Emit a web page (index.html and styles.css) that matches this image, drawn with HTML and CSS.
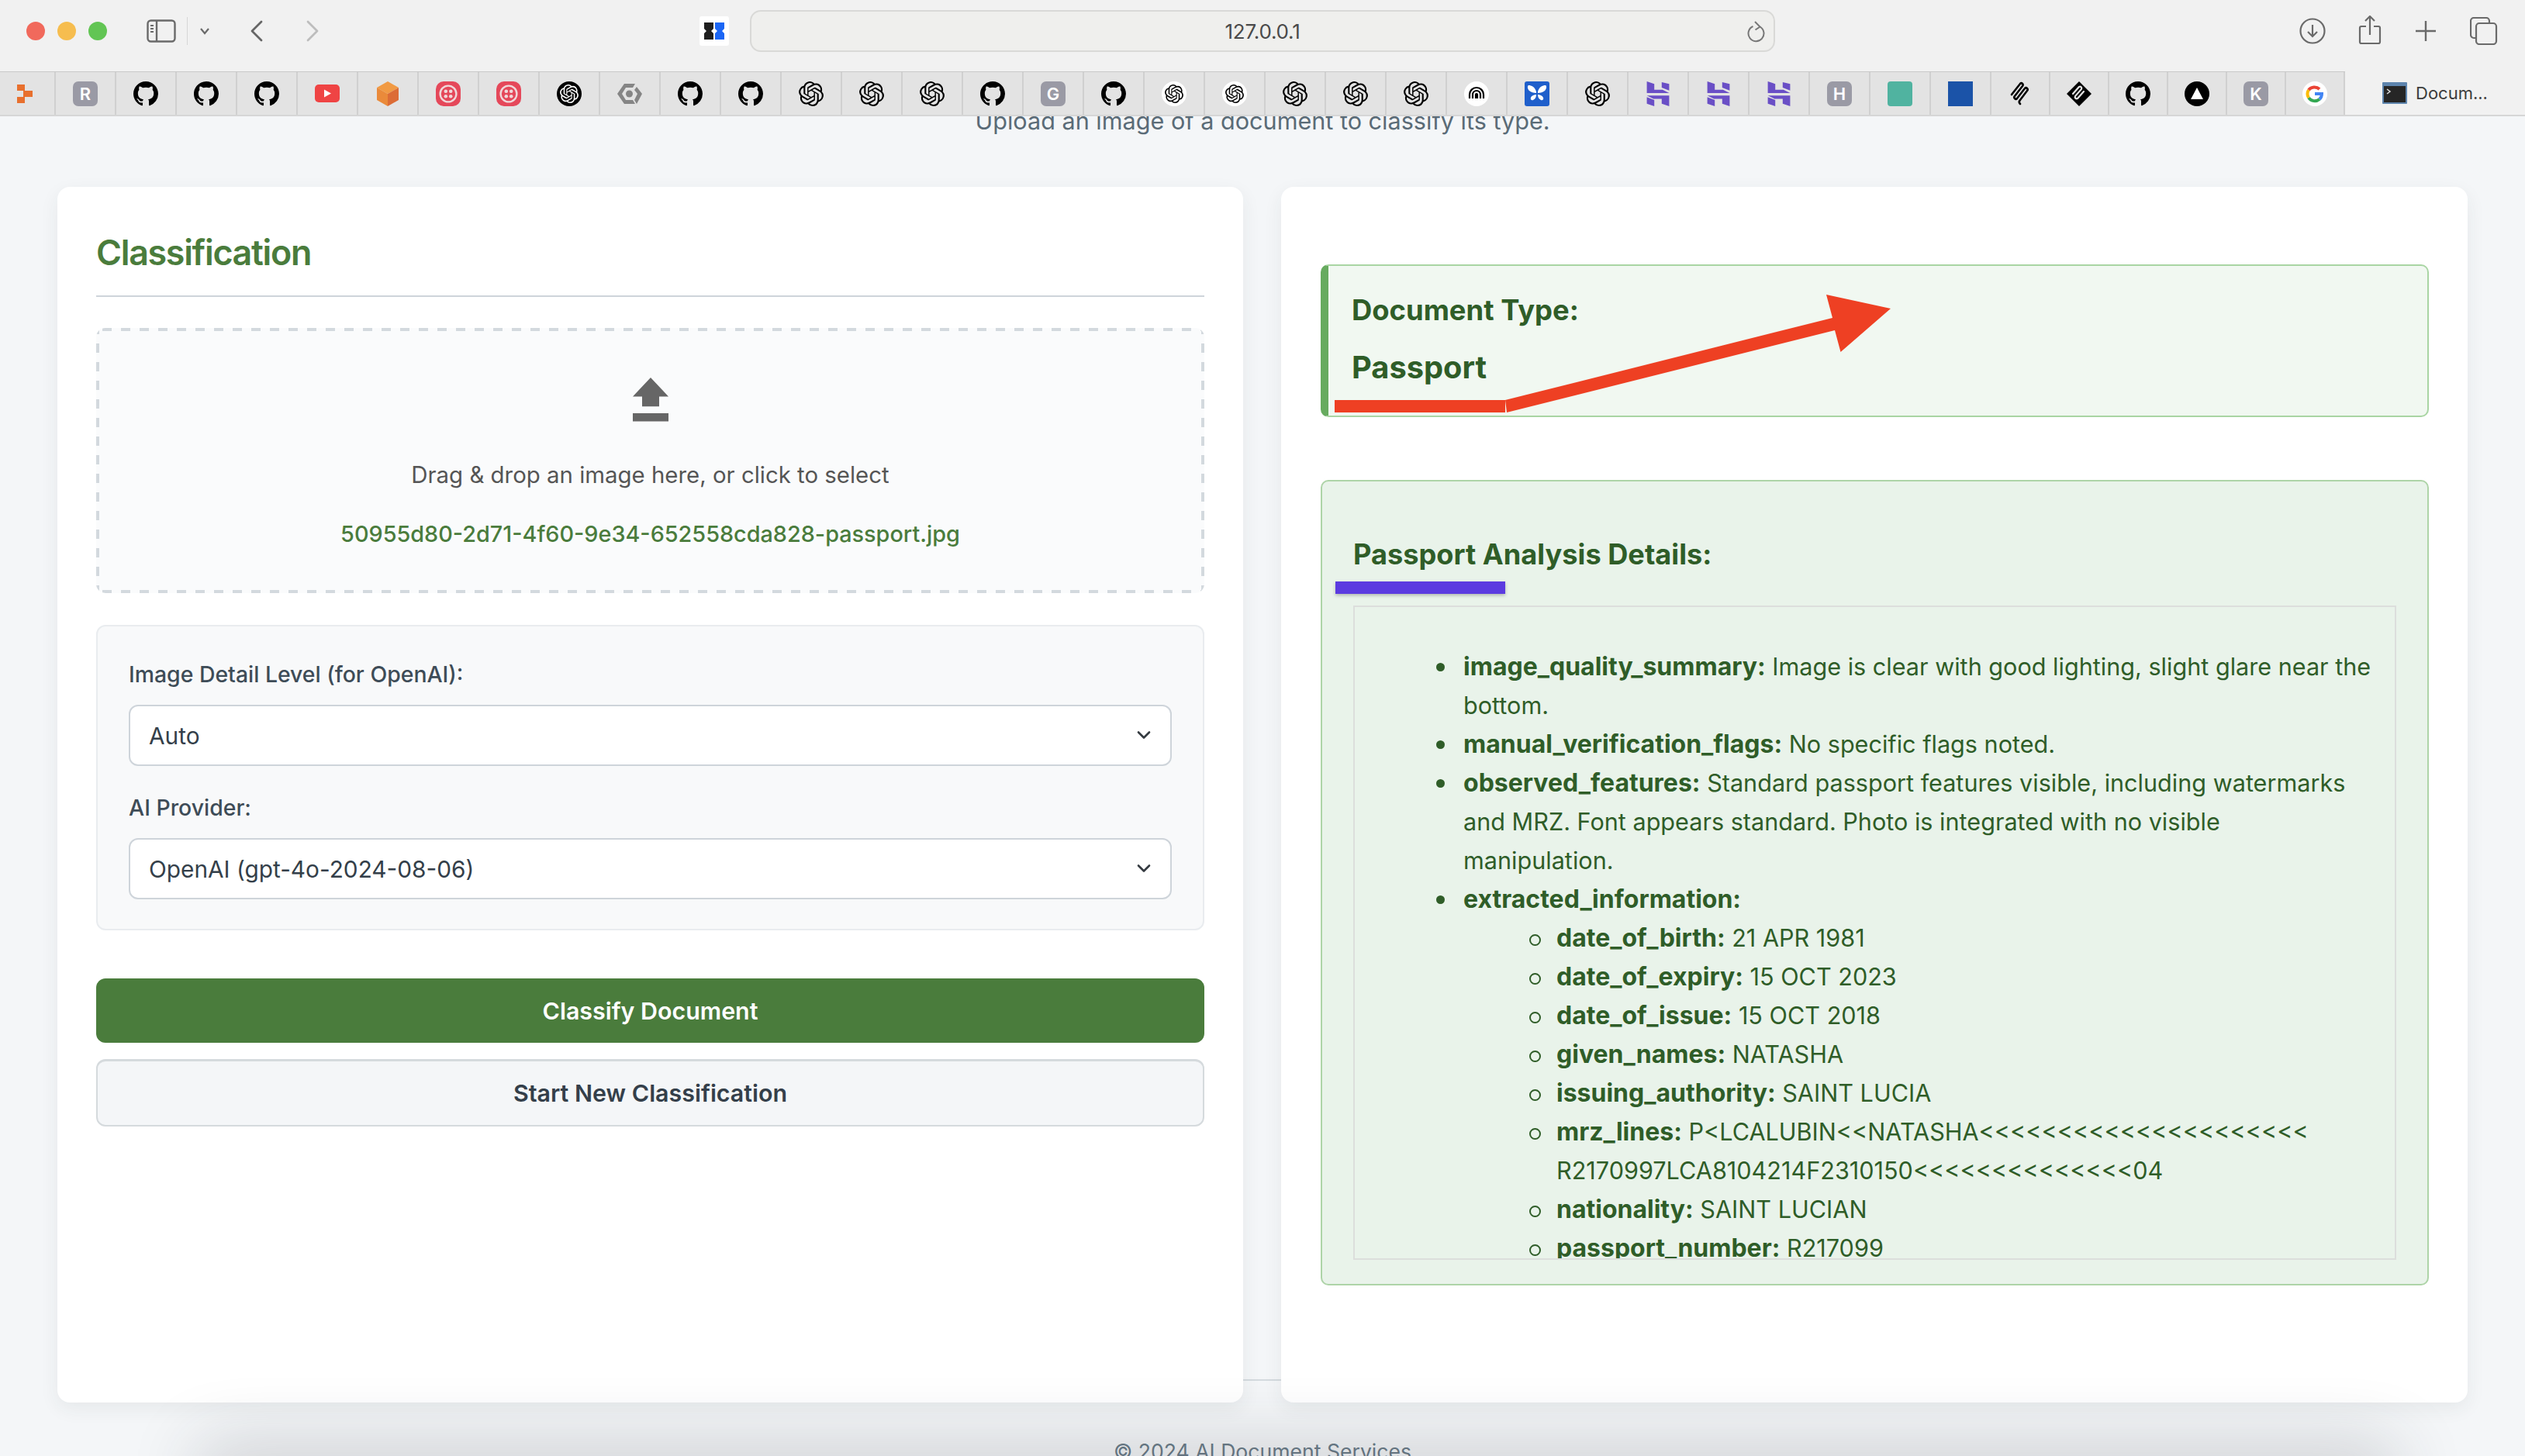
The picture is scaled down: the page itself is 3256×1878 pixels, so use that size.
FILE: index.html
```html
<!DOCTYPE html>
<html lang="en">
<head>
<meta charset="utf-8">
<title>Document Classification</title>
<link rel="stylesheet" href="styles.css">
</head>
<body>
<svg class="defs" aria-hidden="true">
  <symbol id="gh" viewBox="0 0 16 16"><path d="M8 0C3.58 0 0 3.58 0 8c0 3.54 2.29 6.53 5.47 7.59.4.07.55-.17.55-.38 0-.19-.01-.82-.01-1.49-2.01.37-2.53-.49-2.69-.94-.09-.23-.48-.94-.82-1.13-.28-.15-.68-.52-.01-.53.63-.01 1.08.58 1.23.82.72 1.21 1.87.87 2.33.66.07-.52.28-.87.51-1.07-1.78-.2-3.64-.89-3.64-3.95 0-.87.31-1.59.82-2.15-.08-.2-.36-1.02.08-2.12 0 0 .67-.21 2.2.82.64-.18 1.32-.27 2-.27.68 0 1.36.09 2 .27 1.53-1.04 2.2-.82 2.2-.82.44 1.1.16 1.92.08 2.12.51.56.82 1.27.82 2.15 0 3.07-1.87 3.75-3.65 3.95.29.25.54.73.54 1.48 0 1.07-.01 1.93-.01 2.2 0 .21.15.46.55.38A8.013 8.013 0 0016 8c0-4.42-3.58-8-8-8z"/></symbol>
  <symbol id="oai" viewBox="0 0 24 24"><path d="M22.2819 9.8211a5.9847 5.9847 0 0 0-.5157-4.9108 6.0462 6.0462 0 0 0-6.5098-2.9A6.0651 6.0651 0 0 0 4.9807 4.1818a5.9847 5.9847 0 0 0-3.9977 2.9 6.0462 6.0462 0 0 0 .7427 7.0966 5.98 5.98 0 0 0 .511 4.9107 6.051 6.051 0 0 0 6.5146 2.9001A5.9847 5.9847 0 0 0 13.2599 24a6.0557 6.0557 0 0 0 5.7718-4.2058 5.9894 5.9894 0 0 0 3.9977-2.9001 6.0557 6.0557 0 0 0-.7475-7.0729zm-9.022 12.6081a4.4755 4.4755 0 0 1-2.8764-1.0408l.1419-.0804 4.7783-2.7582a.7948.7948 0 0 0 .3927-.6813v-6.7369l2.02 1.1686a.071.071 0 0 1 .038.052v5.5826a4.504 4.504 0 0 1-4.4945 4.4944zm-9.6607-4.1254a4.4708 4.4708 0 0 1-.5346-3.0137l.142.0852 4.783 2.7582a.7712.7712 0 0 0 .7806 0l5.8428-3.3685v2.3324a.0804.0804 0 0 1-.0332.0615L9.74 19.9502a4.4992 4.4992 0 0 1-6.1408-1.6464zM2.3408 7.8956a4.485 4.485 0 0 1 2.3655-1.9728V11.6a.7664.7664 0 0 0 .3879.6765l5.8144 3.3543-2.0201 1.1685a.0757.0757 0 0 1-.071 0l-4.8303-2.7865A4.504 4.504 0 0 1 2.3408 7.872zm16.5963 3.8558L13.1038 8.364 15.1192 7.2a.0757.0757 0 0 1 .071 0l4.8303 2.7913a4.4944 4.4944 0 0 1-.6765 8.1042v-5.6772a.79.79 0 0 0-.407-.667zm2.0107-3.0231l-.142-.0852-4.7735-2.7818a.7759.7759 0 0 0-.7854 0L9.409 9.2297V6.8974a.0662.0662 0 0 1 .0284-.0615l4.8303-2.7866a4.4992 4.4992 0 0 1 6.6802 4.66zM8.3065 12.863l-2.02-1.1638a.0804.0804 0 0 1-.038-.0567V6.0742a4.4992 4.4992 0 0 1 7.3757-3.4537l-.142.0805L8.704 5.459a.7948.7948 0 0 0-.3927.6813zm1.0976-2.3654l2.602-1.4998 2.6069 1.4998v2.9994l-2.5974 1.4997-2.6067-1.4997Z"/></symbol>
  <symbol id="tw" viewBox="0 0 32 32"><rect width="32" height="32" rx="10" fill="#e5485a"/><circle cx="16" cy="16" r="10.400" fill="none" stroke="#f0d8da" stroke-width="2.400"/><circle cx="12.800" cy="12.800" r="2.300" fill="#f0d8da"/><circle cx="19.200" cy="12.800" r="2.300" fill="#f0d8da"/><circle cx="12.800" cy="19.200" r="2.300" fill="#f0d8da"/><circle cx="19.200" cy="19.200" r="2.300" fill="#f0d8da"/></symbol>
  <symbol id="hs" viewBox="0 0 27 30"><path fill="#6a4fc6" d="M0 0l9 3v7h10l8 4H0zM18 1l9 2v8l-9-3.500zM0 17h27v13l-9-3v-6H8zM0 19l9 3.500V30l-9-3z"/></symbol>
</svg>

<div class="window">
  <header class="toolbar">
    <div class="lights"><span class="light red"></span><span class="light amber"></span><span class="light green"></span></div>
    <svg class="tb-sidebar" width="38" height="30" viewBox="0 0 38 30" fill="none" stroke="#6a6a6a" stroke-width="2.400"><rect x="1.500" y="1.500" width="35" height="27" rx="4"/><path d="M13 2v26"/><path d="M5 8h4M5 12h4M5 16h4" stroke-width="1.800"/></svg>
    <span class="tb-rule"></span>
    <svg class="tb-chev" width="14" height="10" viewBox="0 0 14 10" fill="none" stroke="#6a6a6a" stroke-width="2.200"><path d="M2 2l5 6 5-6"/></svg>
    <svg class="tb-back" width="18" height="28" viewBox="0 0 18 28" fill="none" stroke="#666" stroke-width="2.800" stroke-linecap="round" stroke-linejoin="round"><path d="M15 2L3 14l12 12"/></svg>
    <svg class="tb-fwd" width="18" height="28" viewBox="0 0 18 28" fill="none" stroke="#bdbdbd" stroke-width="2.800" stroke-linecap="round" stroke-linejoin="round"><path d="M3 2l12 12L3 26"/></svg>
    <span class="tb-fav"><svg width="38" height="38" viewBox="0 0 38 38"><rect width="38" height="38" rx="3" fill="#fff"/><path fill="#1f1f1f" d="M6 8h12v8l-3 3 3 3v8H6v-8l3-3-3-3z"/><path fill="#1b66f5" d="M20 8h12v8l-3 3 3 3v8H20v-8l3-3-3-3z"/></svg></span>
    <div class="urlbar"><span class="url-text">127.0.0.1</span>
      <svg class="reload" width="24" height="30" viewBox="0 0 24 30" fill="none" stroke="#777" stroke-width="2"><path d="M17.500 8.500a10 10 0 1 1-9-.500"/><path d="M11 2l6.500 6.500-6 4"/></svg>
    </div>
    <div class="tb-right">
      <svg width="34" height="34" viewBox="0 0 34 34" fill="none" stroke="#6a6a6a" stroke-width="2.200"><circle cx="17" cy="17" r="15.500"/><path d="M17 9v15M11 18l6 6 6-6"/></svg>
      <svg width="30" height="38" viewBox="0 0 30 38" fill="none" stroke="#6a6a6a" stroke-width="2.200"><path d="M15 25V2M9 7l6-6 6 6M10 14H4a2 2 0 0 0-2 2v18a2 2 0 0 0 2 2h22a2 2 0 0 0 2-2V16a2 2 0 0 0-2-2h-6"/></svg>
      <svg width="30" height="30" viewBox="0 0 30 30" fill="none" stroke="#6a6a6a" stroke-width="2.400"><path d="M15 2v26M2 15h26"/></svg>
      <svg width="36" height="36" viewBox="0 0 36 36" fill="none" stroke="#6a6a6a" stroke-width="2.200"><rect x="8" y="8" width="26" height="27" rx="4"/><path d="M8 27H5a4 4 0 0 1-4-4V5a4 4 0 0 1 4-4h16a4 4 0 0 1 4 4v3"/></svg>
    </div>
  </header>

  <nav class="bookmarks">
    <a class="bm first"><svg class="ic-s" viewBox="0 0 20 24"><path fill="#e8702e" d="M0 0h10v8H0zM8 8h12v8H8zM0 16h10v8H0z"/></svg></a>
    <a class="bm"><span class="tile">R</span></a>
    <a class="bm"><svg class="ic"><use href="#gh"/></svg></a>
    <a class="bm"><svg class="ic"><use href="#gh"/></svg></a>
    <a class="bm"><svg class="ic"><use href="#gh"/></svg></a>
    <a class="bm"><svg class="ic" viewBox="0 0 32 32"><rect y="4" width="32" height="23" rx="5" fill="#ef4444"/><path fill="#fff" d="M12 10.500l9 5-9 5z"/></svg></a>
    <a class="bm"><svg class="ic" viewBox="0 0 32 32"><path fill="#f19a43" d="M16 0l14 8-14 8L2 8z"/><path fill="#ea8a3a" d="M2 8l14 8v16L2 24z"/><path fill="#dc6c36" d="M30 8L16 16v16l14-8z"/></svg></a>
    <a class="bm"><svg class="ic"><use href="#tw"/></svg></a>
    <a class="bm"><svg class="ic"><use href="#tw"/></svg></a>
    <a class="bm"><span class="disc black"><svg class="in" fill="#fff"><use href="#oai"/></svg></span></a>
    <a class="bm"><svg class="ic" viewBox="0 0 32 32"><path fill="#858585" d="M9 3h14l-3 5h-9l-5 8 5 8h9l3 5H9L0 16zM25 7l7 9-7 13-3-5 4-8-4-5z"/><circle cx="15.500" cy="16" r="4.500" fill="#858585"/></svg></a>
    <a class="bm"><svg class="ic"><use href="#gh"/></svg></a>
    <a class="bm"><svg class="ic"><use href="#gh"/></svg></a>
    <a class="bm"><svg class="ic"><use href="#oai"/></svg></a>
    <a class="bm"><svg class="ic"><use href="#oai"/></svg></a>
    <a class="bm"><svg class="ic"><use href="#oai"/></svg></a>
    <a class="bm"><svg class="ic"><use href="#gh"/></svg></a>
    <a class="bm"><span class="tile">G</span></a>
    <a class="bm"><svg class="ic"><use href="#gh"/></svg></a>
    <a class="bm"><span class="disc white"><svg class="in"><use href="#oai"/></svg></span></a>
    <a class="bm"><span class="disc white"><svg class="in"><use href="#oai"/></svg></span></a>
    <a class="bm"><svg class="ic"><use href="#oai"/></svg></a>
    <a class="bm"><svg class="ic"><use href="#oai"/></svg></a>
    <a class="bm"><svg class="ic"><use href="#oai"/></svg></a>
    <a class="bm"><svg class="ic" viewBox="0 0 32 32"><circle cx="16" cy="16" r="16" fill="#fff"/><path d="M7 22v-5a9 9 0 0 1 18 0v5M11 22v-5a5 5 0 0 1 10 0v5M15 22v-5a1 1 0 0 1 2 0v5" fill="none" stroke="#000" stroke-width="2.200"/></svg></a>
    <a class="bm"><svg class="ic" viewBox="0 0 32 32"><rect width="32" height="32" rx="3" fill="#1f5fcb"/><path fill="#fff" d="M15 13C13 7 9 5 5 5c-2 1-1 5 1 7 2 2 6 3 9 3zM17 13c2-6 6-8 10-8 2 1 1 5-1 7-2 2-6 3-9 3zM15 17c-2 0-6 1-7 4-1 2 1 4 3 3 2-1 4-3 4-7zM17 17c2 0 6 1 7 4 1 2-1 4-3 3-2-1-4-3-4-7z"/></svg></a>
    <a class="bm"><svg class="ic"><use href="#oai"/></svg></a>
    <a class="bm"><svg class="ic"><use href="#hs"/></svg></a>
    <a class="bm"><svg class="ic"><use href="#hs"/></svg></a>
    <a class="bm"><svg class="ic"><use href="#hs"/></svg></a>
    <a class="bm"><span class="tile">H</span></a>
    <a class="bm"><span class="swatch teal"></span></a>
    <a class="bm"><span class="swatch blue"></span></a>
    <a class="bm narrow"><svg class="ic" viewBox="0 0 32 32" fill="none" stroke="#000" stroke-width="2.600" stroke-linecap="round"><path d="M5 17L16 3c2-2 5 1 3 3L9 19c-2 2 1 5 3 3l10-13c2-2 5 1 3 3l-9 12c-2 2-1 4 0 5"/></svg></a>
    <a class="bm narrow"><svg class="ic" viewBox="0 0 32 32"><path d="M16 0l16 16-16 16L0 16z"/><path d="M8 16L16 7c2-1 4 1 3 3l-8 9c-1 2 1 4 3 3l8-9" fill="none" stroke="#e3e3e3" stroke-width="2.200" stroke-linecap="round"/></svg></a>
    <a class="bm narrow"><svg class="ic"><use href="#gh"/></svg></a>
    <a class="bm narrow"><svg class="ic" viewBox="0 0 32 32"><circle cx="16" cy="16" r="16"/><path fill="#fff" d="M16 8l8 15H8z"/></svg></a>
    <a class="bm narrow"><span class="tile">K</span></a>
    <a class="bm narrow"><svg class="ic" viewBox="0 0 32 32"><circle cx="16" cy="16" r="16" fill="#fff"/><path d="M16 16h9a9.500 9.500 0 0 1-3 7" fill="none" stroke="#4285f4" stroke-width="4"/><path d="M22 23A9.500 9.500 0 0 1 8 21" fill="none" stroke="#34a853" stroke-width="4"/><path d="M8 21a9.500 9.500 0 0 1 0-10" fill="none" stroke="#fbbc05" stroke-width="4"/><path d="M8 11a9.500 9.500 0 0 1 14-1" fill="none" stroke="#ea4335" stroke-width="4"/></svg></a>
    <a class="bm-tab"><svg width="32" height="28" viewBox="0 0 32 28"><rect width="32" height="28" rx="1" fill="#5d84ad"/><rect x="2" y="5" width="28" height="21" fill="#262626"/><path d="M6 9l4 3-4 3" fill="none" stroke="#ddd" stroke-width="1.500"/></svg><span class="tab-label">Docum...</span></a>
  </nav>

  <main class="page">
    <p class="subtitle">Upload an image of a document to classify its type.</p>
    <div class="footer-rule"></div>
    <div class="columns">
      <section class="card card-left">
        <h2 class="card-title">Classification</h2>
        <div class="dropzone">
          <svg class="upload" width="46" height="57" viewBox="0 0 46 57"><path fill="#666" d="M23 0l23 37H34v19.500H12V37H0z" transform="scale(1 .66)"/><rect y="46" width="46" height="10.500" fill="#666"/></svg>
          <p class="drop-hint">Drag &amp; drop an image here, or click to select</p>
          <p class="drop-file">50955d80-2d71-4f60-9e34-652558cda828-passport.jpg</p>
        </div>
        <div class="options">
          <label class="opt-label" for="detail">Image Detail Level (for OpenAI):</label>
          <div class="select-wrap">
            <select id="detail" class="select"><option>Auto</option></select>
            <svg class="select-chev" width="18" height="12" viewBox="0 0 18 12" fill="none" stroke="#343a40" stroke-width="2.600" stroke-linecap="round" stroke-linejoin="round"><path d="M2 2.500l7 7 7-7"/></svg>
          </div>
          <label class="opt-label second" for="provider">AI Provider:</label>
          <div class="select-wrap">
            <select id="provider" class="select"><option>OpenAI (gpt-4o-2024-08-06)</option></select>
            <svg class="select-chev" width="18" height="12" viewBox="0 0 18 12" fill="none" stroke="#343a40" stroke-width="2.600" stroke-linecap="round" stroke-linejoin="round"><path d="M2 2.500l7 7 7-7"/></svg>
          </div>
        </div>
        <button class="btn btn-primary">Classify Document</button>
        <button class="btn btn-secondary">Start New Classification</button>
      </section>

      <section class="card card-right">
        <div class="result">
          <h3 class="result-label">Document Type:</h3>
          <p class="result-value">Passport</p>
        </div>
        <div class="details">
          <h3 class="details-title">Passport Analysis Details:</h3>
          <div class="details-scroll">
            <ul class="list">
              <li><strong>image_quality_summary:</strong> Image is clear with good lighting, slight glare near the bottom.</li>
              <li><strong>manual_verification_flags:</strong> No specific flags noted.</li>
              <li><strong>observed_features:</strong> Standard passport features visible, including watermarks and MRZ. Font appears standard. Photo is integrated with no visible<br>manipulation.</li>
              <li><strong>extracted_information:</strong>
                <ul class="sublist">
                  <li><strong>date_of_birth:</strong> 21 APR 1981</li>
                  <li><strong>date_of_expiry:</strong> 15 OCT 2023</li>
                  <li><strong>date_of_issue:</strong> 15 OCT 2018</li>
                  <li><strong>given_names:</strong> NATASHA</li>
                  <li><strong>issuing_authority:</strong> SAINT LUCIA</li>
                  <li><strong>mrz_lines:</strong> P&lt;LCALUBIN&lt;&lt;NATASHA&lt;&lt;&lt;&lt;&lt;&lt;&lt;&lt;&lt;&lt;&lt;&lt;&lt;&lt;&lt;&lt;&lt;&lt;&lt;&lt;&lt;<br>R2170997LCA8104214F2310150&lt;&lt;&lt;&lt;&lt;&lt;&lt;&lt;&lt;&lt;&lt;&lt;&lt;&lt;04</li>
                  <li><strong>nationality:</strong> SAINT LUCIAN</li>
                  <li><strong>passport_number:</strong> R217099</li>
                </ul>
              </li>
            </ul>
          </div>
        </div>
      </section>
    </div>
    <footer class="footer">© 2024 AI Document Services</footer>
    <div class="bottom-shade"></div>
  </main>

  <svg class="annotations" width="3256" height="1878" viewBox="0 0 3256 1878">
    <rect x="1721" y="516" width="220" height="16" fill="#ee4023"/>
    <path fill="#ee4023" d="M1941 516L2363 410 2355 380 2438 398 2373.500 454 2366 426 1943 532z"/>
    <rect class="mark-blue" x="1722" y="750" width="219" height="16" fill="#5b3be0"/>
  </svg>
</div>
</body>
</html>
```
FILE: styles.css
```css
* { box-sizing: border-box; }
html, body { margin: 0; padding: 0; }
body { font-family: Inter, "Liberation Sans", sans-serif; background: #f4f6f8; color: #343f4a; }
.defs { position: absolute; width: 0; height: 0; }

.window { position: relative; width: 3256px; height: 1878px; display: flex; flex-direction: column; overflow: hidden; }

/* Browser toolbar */
.toolbar { height: 92px; flex: none; background: #f1f1f1; display: flex; align-items: center; padding: 0 0 12px 34px; }
.lights { display: flex; gap: 16px; }
.light { width: 24px; height: 24px; border-radius: 50%; }
.light.red { background: #f1695c; }
.light.amber { background: #f6bd4f; }
.light.green { background: #62c554; }
.tb-sidebar { margin-left: 51px; }
.tb-rule { width: 1px; height: 36px; background: #d6d6d6; margin-left: 14px; }
.tb-chev { margin-left: 15px; }
.tb-back { margin-left: 51px; }
.tb-fwd { margin-left: 54px; }
.tb-fav { margin-left: 490px; display: flex; }
.urlbar { width: 1322px; height: 54px; margin-left: 27px; border: 2px solid #d9d9d7; border-radius: 14px; background: #efefed; display: flex; align-items: center; justify-content: center; position: relative; }
.url-text { font-size: 26px; color: #4a4a4a; letter-spacing: -.2px; }
.reload { position: absolute; right: 11px; top: 11px; }
.tb-right { display: flex; align-items: center; margin-left: 676px; gap: 42px; }
.tb-right svg:nth-child(2) { margin-top: -2px; }

/* Bookmarks */
.bookmarks { height: 58px; flex: none; display: flex; background: #e3e3e3; border-top: 1px solid #c9c9c9; border-bottom: 2px solid #d6d6d6; }
.bm { width: 78px; flex: none; display: flex; align-items: center; justify-content: center; border-right: 2px solid #d0d0d0; }
.bm.first { width: 72px; }
.bm.narrow { width: 76px; }
.ic { width: 32px; height: 32px; flex: none; }
.ic-s { width: 20px; height: 24px; margin-left: -6px; }
.tile { width: 32px; height: 32px; border-radius: 7px; background: #9a9aa5; color: #fff; font-size: 22px; font-weight: 600; display: flex; align-items: center; justify-content: center; }
.disc { width: 32px; height: 32px; border-radius: 50%; display: flex; align-items: center; justify-content: center; }
.disc.black { background: #000; }
.disc.white { background: #fff; }
.in { width: 24px; height: 24px; }
.swatch { width: 32px; height: 32px; }
.swatch.teal { background: #50b3a0; border-radius: 4px; }
.swatch.blue { background: #1b53a8; }
.bm-tab { flex: 1; background: #f1f1f1; display: flex; align-items: center; padding-left: 48px; gap: 11px; margin-top: -1px; }
.tab-label { font-size: 22px; color: #3c3c3c; }

/* Page */
.page { position: relative; flex: 1; min-height: 0; background: #f4f6f8; overflow: hidden; }
.subtitle { margin: -18px 0 0; height: 48px; line-height: 48px; text-align: center; font-size: 30.6px; color: #5a6b77; }
.columns { position: relative; margin-top: 61px; padding: 0 74px; display: grid; grid-template-columns: 1529px 1530px; column-gap: 49px; height: 1568px; }
.card { background: #fff; border-radius: 16px; box-shadow: 0 8px 24px rgba(40, 50, 60, .07); }
.footer-rule { position: absolute; left: 74px; right: 74px; top: 1629px; height: 2px; background: #d5dbe0; }

/* Left card */
.card-left { padding: 50px 50px 0; }
.card-title { margin: 0; height: 92px; padding-bottom: 20px; line-height: 70px; font-size: 44.8px; font-weight: 600; letter-spacing: -1.3px; color: #4a7c3c; border-bottom: 2px solid #ced4da; }
.dropzone {
  margin-top: 40px; height: 342px; border-radius: 12px; padding-top: 64px;
  display: flex; flex-direction: column; align-items: center;
  background-color: #fafbfc;
  background-image:
    linear-gradient(90deg, #d3d9de 50%, transparent 50%),
    linear-gradient(90deg, #d3d9de 50%, transparent 50%),
    linear-gradient(0deg, #d3d9de 50%, transparent 50%),
    linear-gradient(0deg, #d3d9de 50%, transparent 50%);
  background-size: 24px 4px, 24px 4px, 4px 24px, 4px 24px;
  background-position: 8px 0, 8px 100%, 0 8px, 100% 8px;
  background-repeat: repeat-x, repeat-x, repeat-y, repeat-y;
}
.upload { flex: none; }
.drop-hint { margin: 44px 0 0; font-size: 29.4px; line-height: 50px; color: #555; }
.drop-file { margin: 26px 0 0; font-size: 28.8px; line-height: 50px; font-weight: 500; color: #4a7c3c; }
.options { margin-top: 41px; height: 394px; padding: 38px 40px; background: #f8f9fa; border: 2px solid #e9ecef; border-radius: 12px; }
.opt-label { display: block; line-height: 48px; font-size: 28.4px; font-weight: 500; color: #3e4c57; }
.opt-label.second { margin-top: 30px; }
.select-wrap { position: relative; margin-top: 15px; }
.select { display: block; width: 100%; height: 79px; padding: 0 24px; appearance: none; background: #fff; border: 2px solid #ced4da; border-radius: 12px; font: 400 29.8px Inter, sans-serif; color: #343f4a; }
.select-chev { position: absolute; right: 27px; top: 33px; pointer-events: none; }
.btn { display: block; width: 100%; font: 600 30.4px Inter, sans-serif; border-radius: 12px; }
.btn-primary { margin-top: 62px; height: 83px; background: #4a7c3c; color: #fff; border: 0; }
.btn-secondary { margin-top: 21px; height: 87px; background: #f4f6f8; color: #343f4a; border: 2px solid #d5dadd; border-top-width: 3px; }

/* Right card */
.card-right { padding: 100px 50px 0 51px; }
.result { height: 197px; padding: 28px 30px 0 30px; background: #f1f8f1; border: 2px solid #a9d5a3; border-left: 10px solid #67ab5f; border-radius: 10px; color: #2f5d28; }
.result-label { margin: 0; font-size: 36.4px; line-height: 58px; font-weight: 700; }
.result-value { margin: 16px 0 0; font-size: 39.8px; line-height: 58px; font-weight: 700; }
.details { margin-top: 81px; height: 1039px; padding: 69px 40px 0 40px; background: #e9f3ea; border: 2px solid #aed4a8; border-radius: 10px; color: #2f5d28; }
.details-title { margin: 0; font-size: 36.2px; line-height: 50px; font-weight: 700; }
.details-scroll { margin-top: 41px; height: 844px; padding: 52px 16px 0 0; border: 2px solid #dcdedc; overflow: hidden; }
.list { margin: 0; padding: 0 0 0 140px; font-size: 30.6px; line-height: 50px; list-style: none; }
.sublist { margin: 0; padding: 0 0 0 120px; list-style: none; }
.list li { position: relative; }
.list li::before { content: ""; position: absolute; left: -35px; top: 20px; width: 11px; height: 11px; border-radius: 50%; background: currentColor; }
.sublist li::before { background: transparent; border: 2px solid currentColor; }
.list strong { font-size: 32px; font-weight: 700; }

/* Footer */
.footer { position: relative; margin-top: -12px; padding-top: 55px; text-align: center; font-size: 26.6px; line-height: 40px; color: #6b7c88; }
.bottom-shade { position: absolute; left: 280px; right: 190px; bottom: -40px; height: 30px; box-shadow: 0 0 90px 24px rgba(40, 45, 55, .2); pointer-events: none; }

/* Annotations */
.annotations { position: absolute; left: 0; top: 0; pointer-events: none; }
.mark-blue { filter: drop-shadow(0 2px 2px rgba(0, 0, 0, .25)); }
```
